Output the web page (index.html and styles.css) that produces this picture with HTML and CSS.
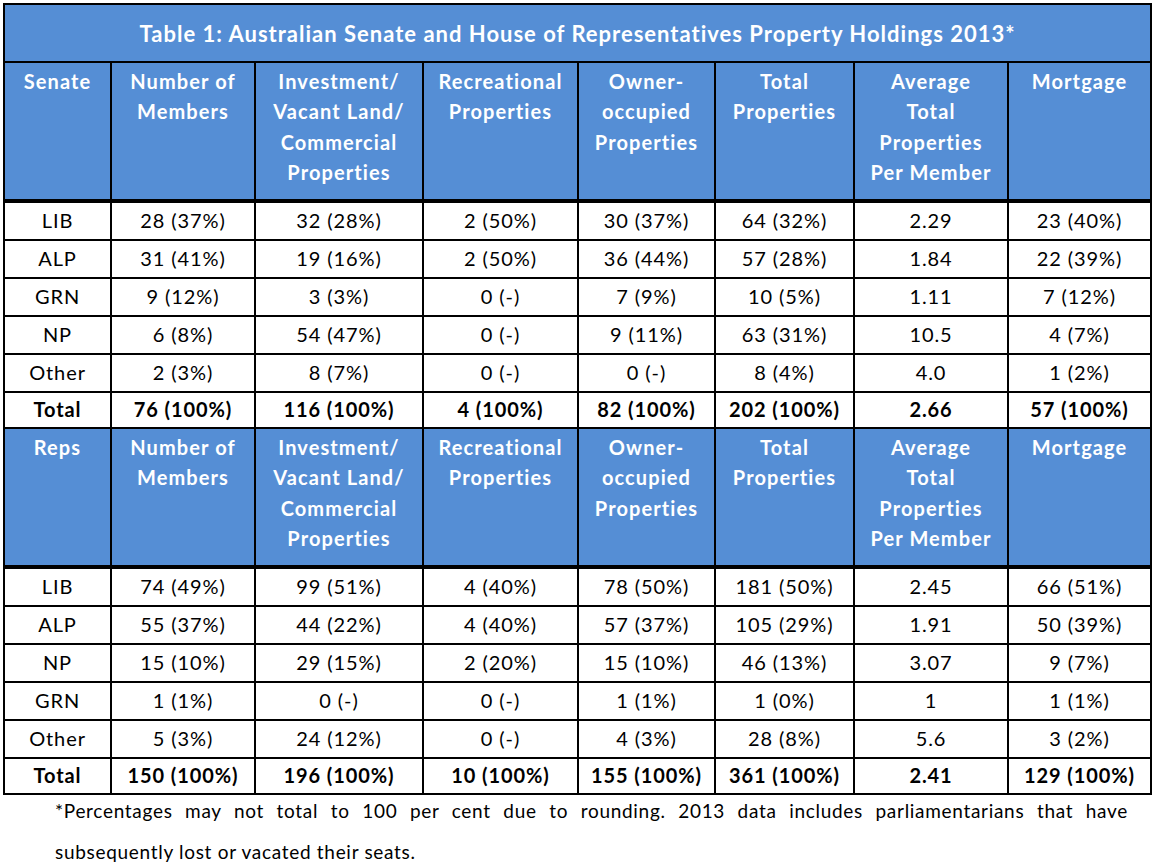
FILE: index.html
```html
<!DOCTYPE html>
<html>
<head>
<meta charset="utf-8">
<link rel="stylesheet" href="styles.css">
</head>
<body>
<table class="holdings">
  <colgroup>
    <col class="c1"><col class="c2"><col class="c3"><col class="c4"><col class="c5"><col class="c6"><col class="c7"><col class="c8">
  </colgroup>
  <tr class="title-row"><th colspan="8" class="title">Table 1: Australian Senate and House of Representatives Property Holdings 2013*</th></tr>
  <tr class="head-row">
    <th>Senate</th><th>Number of<br>Members</th><th>Investment/<br>Vacant Land/<br>Commercial<br>Properties</th><th>Recreational<br>Properties</th><th>Owner-<br>occupied<br>Properties</th><th>Total<br>Properties</th><th>Average<br>Total<br>Properties<br>Per Member</th><th>Mortgage</th>
  </tr>
  <tr class="row"><td>LIB</td><td>28 (37%)</td><td>32 (28%)</td><td>2 (50%)</td><td>30 (37%)</td><td>64 (32%)</td><td>2.29</td><td>23 (40%)</td></tr>
  <tr class="row"><td>ALP</td><td>31 (41%)</td><td>19 (16%)</td><td>2 (50%)</td><td>36 (44%)</td><td>57 (28%)</td><td>1.84</td><td>22 (39%)</td></tr>
  <tr class="row"><td>GRN</td><td>9 (12%)</td><td>3 (3%)</td><td>0 (-)</td><td>7 (9%)</td><td>10 (5%)</td><td>1.11</td><td>7 (12%)</td></tr>
  <tr class="row"><td>NP</td><td>6 (8%)</td><td>54 (47%)</td><td>0 (-)</td><td>9 (11%)</td><td>63 (31%)</td><td>10.5</td><td>4 (7%)</td></tr>
  <tr class="row"><td>Other</td><td>2 (3%)</td><td>8 (7%)</td><td>0 (-)</td><td>0 (-)</td><td>8 (4%)</td><td>4.0</td><td>1 (2%)</td></tr>
  <tr class="row total"><td>Total</td><td>76 (100%)</td><td>116 (100%)</td><td>4 (100%)</td><td>82 (100%)</td><td>202 (100%)</td><td>2.66</td><td>57 (100%)</td></tr>
  <tr class="head-row">
    <th>Reps</th><th>Number of<br>Members</th><th>Investment/<br>Vacant Land/<br>Commercial<br>Properties</th><th>Recreational<br>Properties</th><th>Owner-<br>occupied<br>Properties</th><th>Total<br>Properties</th><th>Average<br>Total<br>Properties<br>Per Member</th><th>Mortgage</th>
  </tr>
  <tr class="row"><td>LIB</td><td>74 (49%)</td><td>99 (51%)</td><td>4 (40%)</td><td>78 (50%)</td><td>181 (50%)</td><td>2.45</td><td>66 (51%)</td></tr>
  <tr class="row"><td>ALP</td><td>55 (37%)</td><td>44 (22%)</td><td>4 (40%)</td><td>57 (37%)</td><td>105 (29%)</td><td>1.91</td><td>50 (39%)</td></tr>
  <tr class="row"><td>NP</td><td>15 (10%)</td><td>29 (15%)</td><td>2 (20%)</td><td>15 (10%)</td><td>46 (13%)</td><td>3.07</td><td>9 (7%)</td></tr>
  <tr class="row"><td>GRN</td><td>1 (1%)</td><td>0 (-)</td><td>0 (-)</td><td>1 (1%)</td><td>1 (0%)</td><td>1</td><td>1 (1%)</td></tr>
  <tr class="row"><td>Other</td><td>5 (3%)</td><td>24 (12%)</td><td>0 (-)</td><td>4 (3%)</td><td>28 (8%)</td><td>5.6</td><td>3 (2%)</td></tr>
  <tr class="row total"><td>Total</td><td>150 (100%)</td><td>196 (100%)</td><td>10 (100%)</td><td>155 (100%)</td><td>361 (100%)</td><td>2.41</td><td>129 (100%)</td></tr>
</table>
<p class="footnote"><span class="fn-line justified">*Percentages may not total to 100 per cent due to rounding. 2013 data includes parliamentarians that have</span><span class="fn-line">subsequently lost or vacated their seats.</span></p>
</body>
</html>
```
FILE: styles.css
```css
html, body {
  margin: 0;
  padding: 0;
  background: #ffffff;
}
body {
  font-family: Lato, "Open Sans", sans-serif;
  color: #000;
}
.holdings {
  margin: 3px 0 0 3px;
  border-collapse: collapse;
  table-layout: fixed;
  width: 1147px;
  border: 2px solid #000;
}
.c1 { width: 107px; }
.c2 { width: 144px; }
.c3 { width: 168px; }
.c4 { width: 155px; }
.c5 { width: 137px; }
.c6 { width: 139px; }
.c7 { width: 154px; }
.c8 { width: 143px; }
.holdings th,
.holdings td {
  border: 2px solid #000;
  padding: 0;
  text-align: center;
  white-space: nowrap;
}
.holdings th {
  background: #558ed5;
  color: #fff;
  font-weight: 700;
}
.title-row th {
  height: 56px;
  font-size: 22px;
  letter-spacing: 1px;
  vertical-align: middle;
}
.head-row th {
  height: 133px;
  font-size: 20px;
  letter-spacing: 1.1px;
  line-height: 30.3px;
  vertical-align: top;
  padding: 3px 0 0;
  border-bottom: 4px solid #000;
}
.row td {
  font-size: 20px;
  letter-spacing: 0.9px;
  vertical-align: middle;
  padding-bottom: 3px;
  height: 33px;
}
.row.total td {
  height: 31px;
  font-weight: 700;
}
.footnote {
  width: 1073px;
  margin: -5px 0 0 55px;
  font-size: 19px;
  letter-spacing: 0.7px;
  line-height: 41px;
}
.fn-line {
  display: block;
}
.fn-line.justified {
  text-align: justify;
  text-align-last: justify;
}
```
